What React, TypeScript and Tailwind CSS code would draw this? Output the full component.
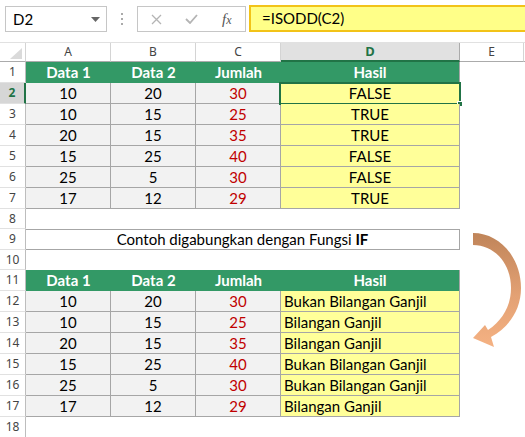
import React from 'react'

const table1 = [
  [10, 20, 30, 'FALSE'],
  [10, 15, 25, 'TRUE'],
  [20, 15, 35, 'TRUE'],
  [15, 25, 40, 'FALSE'],
  [25, 5, 30, 'FALSE'],
  [17, 12, 29, 'TRUE'],
]

const table2 = [
  [10, 20, 30, 'Bukan Bilangan Ganjil'],
  [10, 15, 25, 'Bilangan Ganjil'],
  [20, 15, 35, 'Bilangan Ganjil'],
  [15, 25, 40, 'Bukan Bilangan Ganjil'],
  [25, 5, 30, 'Bukan Bilangan Ganjil'],
  [17, 12, 29, 'Bilangan Ganjil'],
]

const cols = 'grid grid-cols-[26px_85px_85px_85px_179px_64px_1fr]'

function RowHead({ n, active }: { n: number; active?: boolean }) {
  return (
    <div
      className={`flex items-center justify-center border-b border-b-[#e1e1e1] font-['Noto_Sans',sans-serif] text-[12px] ${
        active
          ? 'bg-[#d6d6d6] text-[#217346] font-bold border-r-2 border-r-[#217346]'
          : 'text-[#444] border-r border-r-[#bdbdbd]'
      }`}
    >
      {n}
    </div>
  )
}

function GreenHeader({ n }: { n: number }) {
  return (
    <div className={`${cols} h-[21px]`}>
      <RowHead n={n} />
      {['Data 1', 'Data 2', 'Jumlah'].map(t => (
        <div key={t} className="bg-[#339966] text-white font-bold flex items-center justify-center">{t}</div>
      ))}
      <div className="bg-[#339966] text-white font-bold flex items-center justify-center border-r border-r-[#a6a6a6]">Hasil</div>
      <div />
      <div />
    </div>
  )
}

function DataRow({ n, row, left, selected }: { n: number; row: (string | number)[]; left?: boolean; selected?: boolean }) {
  return (
    <div className={`${cols} h-[21px]`}>
      <RowHead n={n} active={selected} />
      <div className="bg-[#f2f2f2] border-r border-b border-[#a6a6a6] flex items-center justify-center">{row[0]}</div>
      <div className="bg-[#f2f2f2] border-r border-b border-[#a6a6a6] flex items-center justify-center">{row[1]}</div>
      <div className="bg-[#f2f2f2] border-r border-b border-[#a6a6a6] flex items-center justify-center text-[#c00000]">{row[2]}</div>
      <div className={`relative bg-[#ffff99] border-r border-b border-[#a6a6a6] flex items-center ${left ? 'justify-start pl-[3px]' : 'justify-center'}`}>
        {row[3]}
        {selected && (
          <>
            <div className="absolute left-[-2px] top-[-1px] right-[-2px] bottom-[-2px] border-2 border-[#217346]" />
            <div className="absolute right-[-4px] bottom-[-4px] w-[6px] h-[6px] bg-[#217346] border border-white" />
          </>
        )}
      </div>
      <div />
      <div />
    </div>
  )
}

function EmptyRow({ n, h }: { n: number; h: string }) {
  return (
    <div className={`${cols} ${h}`}>
      <RowHead n={n} />
    </div>
  )
}

export default function App() {
  return (
    <div className="relative w-[525px] h-[437px] overflow-hidden bg-white text-black font-['Lato',sans-serif] text-[15px] leading-none">
      {/* formula bar */}
      <div className="h-[42px] flex items-start pl-[5px] pt-[6px]">
        <div className="w-[102px] h-[26px] border border-[#c6c6c6] flex items-center justify-between pl-[7px] pr-[6px] text-[15px]">
          <span>D2</span>
          <svg width="9" height="5" viewBox="0 0 9 5"><path d="M0 0h9L4.5 5z" fill="#666" /></svg>
        </div>
        <div className="w-[30px] h-[26px] flex flex-col items-center justify-center gap-[3px]">
          <span className="w-[2px] h-[2px] bg-[#aaa]" />
          <span className="w-[2px] h-[2px] bg-[#aaa]" />
          <span className="w-[2px] h-[2px] bg-[#aaa]" />
        </div>
        <div className="w-[109px] h-[26px] border border-[#c6c6c6] flex items-center pl-[12px]">
          <svg width="11" height="11" viewBox="0 0 11 11" className="ml-[1px]">
            <path d="M1 1l9 9M10 1l-9 9" stroke="#b4b4b4" strokeWidth="1.3" />
          </svg>
          <svg width="13" height="10" viewBox="0 0 13 10" className="ml-[23px]">
            <path d="M1 5l4 4 7-8" stroke="#b4b4b4" strokeWidth="1.8" fill="none" />
          </svg>
          <span className="ml-[24px] font-['Liberation_Serif',serif] italic text-[15px] text-[#555]">f<span className="text-[12px]">x</span></span>
        </div>
        <div className="ml-[3px] mt-[-1px] flex-1 h-[27px] bg-[#ffff88] border-y-2 border-l-2 border-[#f2c318] flex items-center pl-[11px] text-[15px]">
          =ISODD(C2)
        </div>
      </div>

      {/* column headers */}
      <div className={`${cols} h-[20px] border-t border-t-[#e1e1e1] font-['Noto_Sans',sans-serif] text-[12px] text-[#444]`}>
        <div className="relative border-r border-r-[#d4d4d4] border-b border-b-[#ababab]">
          <svg width="12" height="11" viewBox="0 0 12 11" className="absolute right-[3px] bottom-[2px]">
            <path d="M12 0V11H0z" fill="#dadada" />
          </svg>
        </div>
        {['A', 'B', 'C'].map(c => (
          <div key={c} className="flex items-center justify-center border-r border-r-[#d4d4d4] border-b border-b-[#ababab]">{c}</div>
        ))}
        <div className="flex items-center justify-center bg-[#e1e1e1] border-r border-r-[#ababab] border-b-2 border-b-[#217346] text-[#217346] font-bold text-[13px]">D</div>
        <div className="flex items-center justify-center border-r border-r-[#d4d4d4] border-b border-b-[#ababab]">E</div>
        <div className="border-b border-b-[#ababab]" />
      </div>

      <GreenHeader n={1} />
      {table1.map((r, i) => (
        <DataRow key={i} n={i + 2} row={r} selected={i === 0} />
      ))}
      <EmptyRow n={8} h="h-[20px]" />

      <div className={`${cols} h-[21px]`}>
        <RowHead n={9} />
        <div className="col-span-4 border-y border-r border-[#a6a6a6] flex items-center justify-center">
          Contoh digabungkan dengan Fungsi&nbsp;<b>IF</b>
        </div>
      </div>
      <EmptyRow n={10} h="h-[20px]" />

      <GreenHeader n={11} />
      {table2.map((r, i) => (
        <DataRow key={i} n={i + 12} row={r} left />
      ))}
      <EmptyRow n={18} h="h-[21px]" />

      {/* curved arrow */}
      <svg className="absolute left-0 top-0 pointer-events-none" width="525" height="437" viewBox="0 0 525 437">
        <defs>
          <linearGradient id="arr" x1="0" y1="232" x2="0" y2="348" gradientUnits="userSpaceOnUse">
            <stop offset="0" stopColor="#bf8459" />
            <stop offset="0.55" stopColor="#e3a174" />
            <stop offset="1" stopColor="#f5b283" />
          </linearGradient>
        </defs>
        <path
          d="M473 233 C500 233 521 258 521 288 C521 310 509 327 491 337 L494 347 L473 338 L485 325 L488 330 C503 320 511 305 511 288 C511 264 495 245 473 245 Z"
          fill="url(#arr)"
        />
      </svg>
    </div>
  )
}
